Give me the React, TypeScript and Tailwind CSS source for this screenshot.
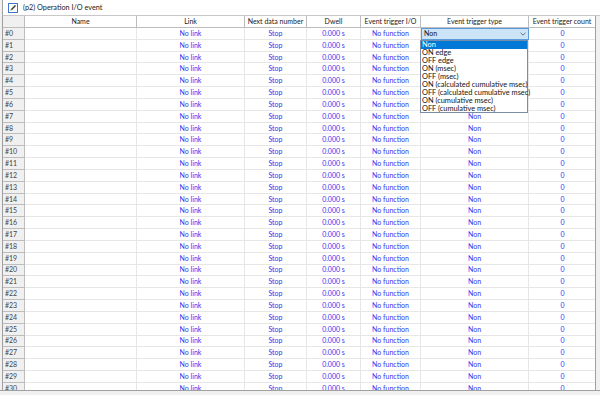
import React from 'react';

const columns = [
  { title: '', w: 'w-[22px]' },
  { title: 'Name', w: 'w-[112px]' },
  { title: 'Link', w: 'w-[108px]' },
  { title: 'Next data number', w: 'w-[62px]' },
  { title: 'Dwell', w: 'w-[54px]' },
  { title: 'Event trigger I/O', w: 'w-[60px]' },
  { title: 'Event trigger type', w: 'w-[108px]' },
  { title: 'Event trigger count', w: 'w-[67px]' },
];

const triggerTypes = [
  'Non',
  'ON edge',
  'OFF edge',
  'ON (msec)',
  'OFF (msec)',
  'ON (calculated cumulative msec)',
  'OFF (calculated cumulative msec)',
  'ON (cumulative msec)',
  'OFF (cumulative msec)',
];

const rows = Array.from({ length: 32 }, (_, i) => i);

const EditIcon = () => (
  <svg width="10" height="10" viewBox="0 0 10 10" className="shrink-0">
    <rect x="0.5" y="0.5" width="9" height="9" fill="#fff" stroke="#3c78c8" />
    <path d="M2.5 7.5 L3 6 L7 2 L8 3 L4 7 Z" fill="#333" />
    <path d="M2.5 7.5 L3 6 L4 7 Z" fill="#c8a050" />
  </svg>
);

const Chevron = () => (
  <svg width="6" height="4" viewBox="0 0 6 4" className="shrink-0">
    <path d="M0.5 0.8 L3 3.2 L5.5 0.8" fill="none" stroke="#555" strokeWidth="0.8" />
  </svg>
);

export default function App() {
  return (
    <div
      className="relative w-[600px] h-[395px] overflow-hidden bg-[#f0f0f0] text-[7px] leading-none text-[#222]"
      style={{ fontFamily: 'Lato, "Noto Sans", sans-serif' }}
    >
      {/* Title bar */}
      <div className="h-[16px] ml-[2px] flex items-center gap-[5px] pl-[5px] bg-white border-b border-[#c8c8c8] border-l border-l-[#a0a0a0]">
        <EditIcon />
        <span className="text-[7.3px] text-[#222]">(p2) Operation I/O event</span>
      </div>

      {/* Grid */}
      <div className="ml-[2px] w-[594px] h-[374px] overflow-hidden bg-white border-l border-r border-[#a0a0a0]">
        <div className="flex h-[12px]">
          {columns.map((c, i) => (
            <div
              key={i}
              className={`${c.w} shrink-0 flex items-center justify-center border-r border-b border-[#bdbdbd] ${i === 0 ? 'bg-[#f0f0f0]' : 'bg-white'} text-[#222] whitespace-nowrap`}
            >
              {c.title}
            </div>
          ))}
        </div>
        {rows.map((r) => (
          <div key={r} className="flex h-[11.83px] text-[#3434f0]">
            <div className="w-[22px] shrink-0 flex items-center pl-[2px] bg-[#f0f0f0] border-r border-b border-[#bdbdbd] text-[#444]">
              #{r}
            </div>
            <div className="w-[112px] shrink-0 border-r border-b border-[#e6e6e6]" />
            <div className="w-[108px] shrink-0 flex items-center justify-center border-r border-b border-[#e6e6e6]">No link</div>
            <div className="w-[62px] shrink-0 flex items-center justify-center border-r border-b border-[#e6e6e6]">Stop</div>
            <div className="w-[54px] shrink-0 flex items-center justify-center border-r border-b border-[#e6e6e6]">0.000 s</div>
            <div className="w-[60px] shrink-0 flex items-center justify-center border-r border-b border-[#e6e6e6]">No function</div>
            {r === 0 ? (
              <div className="w-[108px] shrink-0 flex items-center justify-between px-[2px] bg-[#cce4f7] border border-[#5a9ad8] text-[#111]">
                <span>Non</span>
                <Chevron />
              </div>
            ) : (
              <div className="w-[108px] shrink-0 flex items-center justify-center border-r border-b border-[#e6e6e6]">Non</div>
            )}
            <div className="w-[67px] shrink-0 flex items-center justify-center border-b border-[#e6e6e6]">0</div>
          </div>
        ))}
      </div>

      {/* Bottom strip */}
      <div className="h-[5px] border-t border-[#a0a0a0] bg-[#f0f0f0]" />

      {/* Open drop-down list */}
      <div className="absolute left-[420px] top-[40px] w-[108px] bg-white border border-[#7a8ca8] text-[7.4px]">
        {triggerTypes.map((t, i) => (
          <div
            key={t}
            className={`h-[7.95px] flex items-center pl-[1px] whitespace-nowrap ${i === 0 ? 'bg-[#0078d7] text-white' : 'text-[#111]'}`}
          >
            {t}
          </div>
        ))}
      </div>
    </div>
  );
}
